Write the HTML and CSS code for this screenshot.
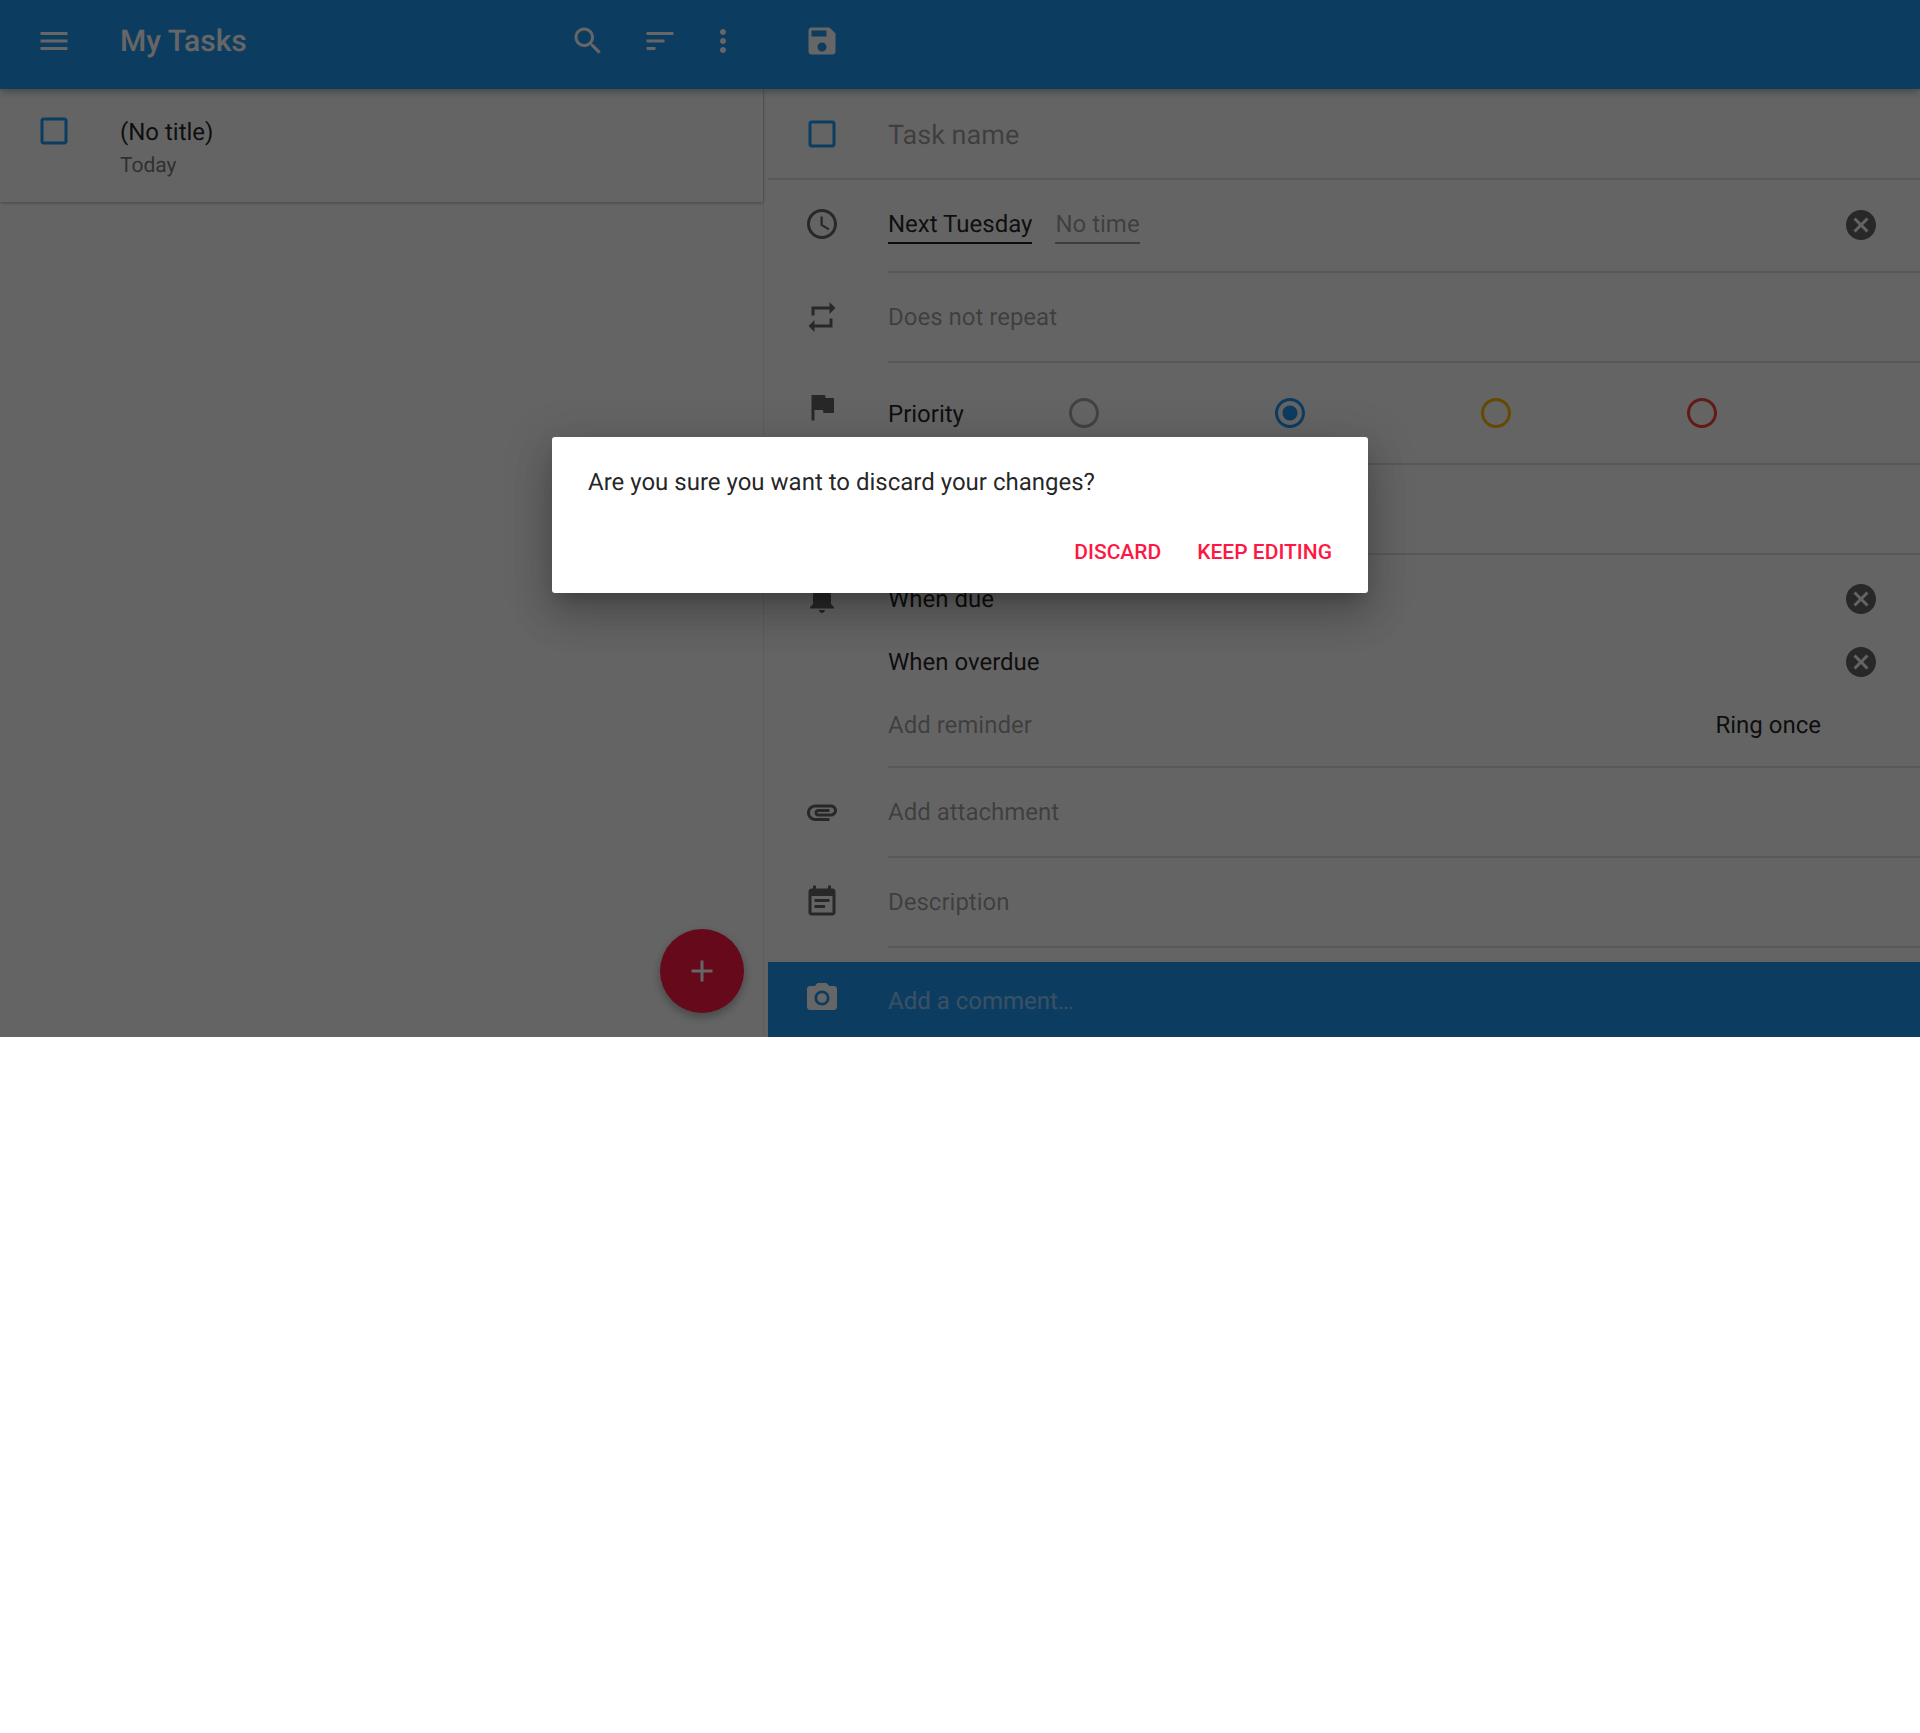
FILE: index.html
```html
<!DOCTYPE html>
<html lang="en">
<head>
    <meta charset="UTF-8">
    <meta name="viewport" content="width=device-width, initial-scale=1.0">
    <title>My Tasks</title>
    <link rel="stylesheet" href="styles.css">
</head>
<body>
    <div class="app">
        <!-- Top bar -->
        <header class="toolbar">
            <div class="toolbar-list">
                <svg class="icon" viewBox="0 0 24 24"><path d="M3 18h18v-2H3v2zm0-5h18v-2H3v2zm0-7v2h18V6H3z"/></svg>
                <h1 class="toolbar-title">My Tasks</h1>
                <div class="toolbar-actions">
                    <svg class="icon" viewBox="0 0 24 24"><path d="M15.5 14h-.79l-.28-.27C15.41 12.59 16 11.11 16 9.5 16 5.91 13.09 3 9.5 3S3 5.91 3 9.5 5.91 16 9.5 16c1.61 0 3.09-.59 4.23-1.57l.27.28v.79l5 4.99L20.49 19l-4.99-5zm-6 0C7.01 14 5 11.99 5 9.5S7.01 5 9.5 5 14 7.01 14 9.5 11.99 14 9.5 14z"/></svg>
                    <svg class="icon" viewBox="0 0 24 24"><path d="M3 18h6v-2H3v2zM3 6v2h18V6H3zm0 7h12v-2H3v2z"/></svg>
                    <svg class="icon icon-more" viewBox="0 0 24 24"><path d="M12 8c1.1 0 2-.9 2-2s-.9-2-2-2-2 .9-2 2 .9 2 2 2zm0 2c-1.1 0-2 .9-2 2s.9 2 2 2 2-.9 2-2-.9-2-2-2zm0 6c-1.1 0-2 .9-2 2s.9 2 2 2 2-.9 2-2-.9-2-2-2z"/></svg>
                </div>
            </div>
            <div class="toolbar-edit">
                <svg class="icon" viewBox="0 0 24 24"><path d="M17 3H5c-1.11 0-2 .9-2 2v14c0 1.1.89 2 2 2h14c1.1 0 2-.9 2-2V7l-4-4zm-5 16c-1.66 0-3-1.34-3-3s1.34-3 3-3 3 1.34 3 3-1.34 3-3 3zm3-10H5V5h10v4z"/></svg>
            </div>
        </header>

        <div class="panes">
            <!-- Task list -->
            <section class="list-pane">
                <div class="task-item">
                    <svg class="icon icon-blue" viewBox="0 0 24 24"><path d="M19 5v14H5V5h14m0-2H5c-1.1 0-2 .9-2 2v14c0 1.1.9 2 2 2h14c1.1 0 2-.9 2-2V5c0-1.1-.9-2-2-2z"/></svg>
                    <div class="task-text">
                        <div class="task-title">(No title)</div>
                        <div class="task-date">Today</div>
                    </div>
                </div>
                <button class="fab">
                    <svg class="icon" viewBox="0 0 24 24"><path d="M19 13h-6v6h-2v-6H5v-2h6V5h2v6h6v2z"/></svg>
                </button>
            </section>

            <!-- Task editor -->
            <section class="edit-pane">
                <div class="row row-name">
                    <svg class="icon icon-blue" viewBox="0 0 24 24"><path d="M19 5v14H5V5h14m0-2H5c-1.1 0-2 .9-2 2v14c0 1.1.9 2 2 2h14c1.1 0 2-.9 2-2V5c0-1.1-.9-2-2-2z"/></svg>
                    <div class="row-body name-hint">Task name</div>
                </div>

                <div class="row row-when">
                    <svg class="icon icon-dark" viewBox="0 0 24 24"><path d="M11.99 2C6.47 2 2 6.48 2 12s4.47 10 9.99 10C17.52 22 22 17.52 22 12S17.52 2 11.99 2zM12 20c-4.42 0-8-3.58-8-8s3.58-8 8-8 8 3.58 8 8-3.58 8-8 8zm.5-13H11v6l5.25 3.15.75-1.23-4.5-2.67z"/></svg>
                    <div class="row-body">
                        <span class="picker">Next Tuesday</span>
                        <span class="picker picker-empty">No time</span>
                        <svg class="icon icon-clear" viewBox="0 0 24 24"><path d="M12 2C6.47 2 2 6.47 2 12s4.47 10 10 10 10-4.47 10-10S17.53 2 12 2zm5 13.59L15.59 17 12 13.41 8.41 17 7 15.59 10.59 12 7 8.41 8.41 7 12 10.59 15.59 7 17 8.41 13.41 12 17 15.59z"/></svg>
                    </div>
                </div>

                <div class="row">
                    <svg class="icon icon-dark" viewBox="0 0 24 24"><path d="M7 7h10v3l4-4-4-4v3H5v6h2V7zm10 10H7v-3l-4 4 4 4v-3h12v-6h-2v4z"/></svg>
                    <div class="row-body hint">Does not repeat</div>
                </div>

                <div class="row row-priority">
                    <svg class="icon icon-dark" viewBox="0 0 24 24"><path d="M14.4 6L14 4H5v17h2v-7h5.6l.4 2h7V6z"/></svg>
                    <div class="row-body">
                        <span class="priority-label">Priority</span>
                        <div class="priority-options">
                            <svg class="icon radio-none" viewBox="0 0 24 24"><path d="M12 2C6.48 2 2 6.48 2 12s4.48 10 10 10 10-4.48 10-10S17.52 2 12 2zm0 18c-4.42 0-8-3.58-8-8s3.58-8 8-8 8 3.58 8 8-3.58 8-8 8z"/></svg>
                            <svg class="icon radio-low" viewBox="0 0 24 24"><path d="M12 7c-2.76 0-5 2.24-5 5s2.24 5 5 5 5-2.24 5-5-2.24-5-5-5zm0-5C6.48 2 2 6.48 2 12s4.48 10 10 10 10-4.48 10-10S17.52 2 12 2zm0 18c-4.42 0-8-3.58-8-8s3.58-8 8-8 8 3.58 8 8-3.58 8-8 8z"/></svg>
                            <svg class="icon radio-medium" viewBox="0 0 24 24"><path d="M12 2C6.48 2 2 6.48 2 12s4.48 10 10 10 10-4.48 10-10S17.52 2 12 2zm0 18c-4.42 0-8-3.58-8-8s3.58-8 8-8 8 3.58 8 8-3.58 8-8 8z"/></svg>
                            <svg class="icon radio-high" viewBox="0 0 24 24"><path d="M12 2C6.48 2 2 6.48 2 12s4.48 10 10 10 10-4.48 10-10S17.52 2 12 2zm0 18c-4.42 0-8-3.58-8-8s3.58-8 8-8 8 3.58 8 8-3.58 8-8 8z"/></svg>
                        </div>
                    </div>
                </div>

                <div class="row">
                    <div class="row-body row-body-blank"></div>
                </div>

                <div class="row row-reminders">
                    <svg class="icon icon-dark" viewBox="0 0 24 24"><path d="M12 22c1.1 0 2-.9 2-2h-4c0 1.1.89 2 2 2zm6-6v-5c0-3.07-1.64-5.64-4.5-6.32V4c0-.83-.67-1.5-1.5-1.5s-1.5.67-1.5 1.5v.68C7.63 5.36 6 7.92 6 11v5l-2 2v1h16v-1l-2-2z"/></svg>
                    <div class="row-body">
                        <div class="reminder">
                            <span>When due</span>
                            <svg class="icon icon-clear" viewBox="0 0 24 24"><path d="M12 2C6.47 2 2 6.47 2 12s4.47 10 10 10 10-4.47 10-10S17.53 2 12 2zm5 13.59L15.59 17 12 13.41 8.41 17 7 15.59 10.59 12 7 8.41 8.41 7 12 10.59 15.59 7 17 8.41 13.41 12 17 15.59z"/></svg>
                        </div>
                        <div class="reminder">
                            <span>When overdue</span>
                            <svg class="icon icon-clear" viewBox="0 0 24 24"><path d="M12 2C6.47 2 2 6.47 2 12s4.47 10 10 10 10-4.47 10-10S17.53 2 12 2zm5 13.59L15.59 17 12 13.41 8.41 17 7 15.59 10.59 12 7 8.41 8.41 7 12 10.59 15.59 7 17 8.41 13.41 12 17 15.59z"/></svg>
                        </div>
                        <div class="reminder">
                            <span class="hint">Add reminder</span>
                            <span class="ring-mode">Ring once</span>
                        </div>
                    </div>
                </div>

                <div class="row">
                    <svg class="icon icon-dark" viewBox="0 0 24 24"><path d="M2 12.5C2 9.46 4.46 7 7.5 7H18c2.21 0 4 1.79 4 4s-1.79 4-4 4H9.5C8.12 15 7 13.88 7 12.5S8.12 10 9.5 10H17v2H9.41c-.55 0-.55 1 0 1H18c1.1 0 2-.9 2-2s-.9-2-2-2H7.5C5.57 9 4 10.57 4 12.5S5.57 16 7.5 16H17v2H7.5C4.46 18 2 15.54 2 12.5z"/></svg>
                    <div class="row-body hint">Add attachment</div>
                </div>

                <div class="row">
                    <svg class="icon icon-dark" viewBox="0 0 24 24"><path d="M17 10H7v2h10v-2zm2-7h-1V1h-2v2H8V1H6v2H5c-1.11 0-1.99.9-1.99 2L3 19c0 1.1.89 2 2 2h14c1.1 0 2-.9 2-2V5c0-1.1-.9-2-2-2zm0 16H5V8h14v11zm-5-5H7v2h7v-2z"/></svg>
                    <div class="row-body hint">Description</div>
                </div>

                <div class="comment-bar">
                    <svg class="icon" viewBox="0 0 24 24"><circle cx="12" cy="12" r="3.2"/><path d="M9 2L7.17 4H4c-1.1 0-2 .9-2 2v12c0 1.1.9 2 2 2h16c1.1 0 2-.9 2-2V6c0-1.1-.9-2-2-2h-3.17L15 2H9zm3 15c-2.76 0-5-2.24-5-5s2.24-5 5-5 5 2.24 5 5-2.24 5-5 5z"/></svg>
                    <span class="comment-hint">Add a comment…</span>
                </div>
            </section>
        </div>

        <!-- Discard dialog -->
        <div class="scrim">
            <div class="dialog">
                <p class="dialog-text">Are you sure you want to discard your changes?</p>
                <div class="dialog-actions">
                    <button class="dialog-btn">DISCARD</button>
                    <button class="dialog-btn">KEEP EDITING</button>
                </div>
            </div>
        </div>
    </div>
</body>
</html>
```

FILE: styles.css
```css
body {
    font-family: Roboto, "Liberation Sans", sans-serif;
    background-color: white;
    color: rgba(0, 0, 0, 0.87);
    margin: 0;
    padding: 0;
    font-size: 24px;
    text-rendering: geometricPrecision;
}

.app {
    position: relative;
    height: 1037px;
    overflow: hidden;
    display: flex;
    flex-direction: column;
    background-color: #fafafa;
}

.icon {
    width: 36px;
    height: 36px;
    flex: none;
    fill: currentColor;
}

.icon-blue {
    color: #2196f3;
}

.icon-dark {
    color: rgba(0, 0, 0, 0.6);
}

.icon-clear {
    color: rgba(0, 0, 0, 0.6);
    margin-left: auto;
    margin-right: 41px;
}

.hint {
    color: rgba(0, 0, 0, 0.38);
}

/* Top bar */
.toolbar {
    position: relative;
    z-index: 1;
    flex: none;
    height: 89px;
    display: flex;
    background-color: #2196f3;
    color: white;
    box-shadow: 0 2px 8px rgba(0, 0, 0, 0.35);
}

.toolbar-list {
    width: 768px;
    box-sizing: border-box;
    padding: 23px 27px 0 36px;
    display: flex;
    align-items: flex-start;
}

.toolbar-title {
    margin: 1px 0 0 48px;
    font-size: 30px;
    font-weight: 500;
    line-height: 36px;
}

.toolbar-actions {
    margin-left: auto;
    display: flex;
    gap: 36px;
}

.icon-more {
    margin-left: -9px;
}

.toolbar-edit {
    padding: 23px 0 0 36px;
}

/* Panes */
.panes {
    flex: 1;
    min-height: 0;
    display: grid;
    grid-template-columns: 764px 1fr;
    gap: 4px;
}

.list-pane {
    position: relative;
    border-right: 1px solid rgba(0, 0, 0, 0.08);
}

.task-item {
    height: 113px;
    box-sizing: border-box;
    padding: 24px 0 0 36px;
    display: flex;
    align-items: flex-start;
    background-color: #fafafa;
    box-shadow: 0 1px 3px rgba(0, 0, 0, 0.3);
}

.task-text {
    margin-left: 48px;
    margin-top: 3px;
}

.task-title {
    line-height: 32px;
}

.task-date {
    margin-top: 4px;
    font-size: 21px;
    line-height: 28px;
    color: rgba(0, 0, 0, 0.54);
}

.fab {
    position: absolute;
    right: 19px;
    bottom: 24px;
    width: 84px;
    height: 84px;
    padding: 0;
    border: none;
    border-radius: 50%;
    display: flex;
    align-items: center;
    justify-content: center;
    background-color: #ff1744;
    color: white;
    box-shadow: 0 4px 10px rgba(0, 0, 0, 0.3);
}

.edit-pane {
    display: flex;
    flex-direction: column;
}

.row {
    height: 90px;
    box-sizing: border-box;
    padding-left: 36px;
    display: flex;
    align-items: center;
    flex: none;
}

.row > .icon {
    margin-bottom: 2px;
}

.row-body {
    flex: 1;
    align-self: stretch;
    margin-left: 48px;
    display: flex;
    align-items: center;
    border-bottom: 2px solid rgba(0, 0, 0, 0.12);
}

.row-body-blank {
    margin-left: 84px;
}

.row-name {
    height: 91px;
    border-bottom: 2px solid rgba(0, 0, 0, 0.12);
}

.row-name > .icon {
    margin-bottom: 0;
}

.row-name .row-body {
    padding-top: 2px;
    border-bottom: none;
}

.name-hint {
    font-size: 27px;
    color: rgba(0, 0, 0, 0.38);
}

.row-when {
    height: 93px;
}

.row-when > .icon {
    margin-bottom: 5px;
}

.row-when .icon-clear {
    margin-bottom: 2px;
}

.picker {
    line-height: 32px;
    padding-bottom: 2px;
    border-bottom: 2px solid rgba(0, 0, 0, 0.87);
    margin-right: 23px;
}

.picker-empty {
    color: rgba(0, 0, 0, 0.38);
    border-bottom-color: rgba(0, 0, 0, 0.38);
}

.row-priority {
    height: 102px;
}

.row-priority > .icon {
    align-self: flex-start;
    margin-top: 26px;
    margin-bottom: 0;
}

.priority-label {
    width: 93px;
    padding-top: 1px;
}

.priority-options {
    display: grid;
    grid-template-columns: repeat(4, 206px);
    justify-items: center;
}

.radio-none {
    color: rgba(0, 0, 0, 0.34);
}

.radio-low {
    color: #2196f3;
}

.radio-medium {
    color: #ffb300;
}

.radio-high {
    color: #f44336;
}

.row-reminders {
    height: 213px;
}

.row-reminders > .icon {
    align-self: flex-start;
    margin-top: 25px;
    margin-bottom: 0;
}

.row-reminders .row-body {
    display: block;
    padding-top: 12px;
}

.reminder {
    height: 63px;
    display: flex;
    align-items: center;
}

.ring-mode {
    margin-left: auto;
    margin-right: 99px;
}

.comment-bar {
    margin-top: auto;
    height: 75px;
    box-sizing: border-box;
    padding: 18px 0 0 36px;
    display: flex;
    align-items: flex-start;
    background-color: #2196f3;
    color: white;
}

.comment-hint {
    margin-left: 48px;
    margin-top: 1px;
    line-height: 40px;
    color: rgba(255, 255, 255, 0.5);
}

/* Dialog */
.scrim {
    position: absolute;
    inset: 0;
    z-index: 2;
    background-color: rgba(0, 0, 0, 0.6);
    display: flex;
    align-items: flex-start;
    justify-content: center;
    padding-top: 437px;
}

.dialog {
    width: 816px;
    height: 156px;
    box-sizing: border-box;
    padding: 29px 36px 0;
    background-color: white;
    border-radius: 3px;
    box-shadow: 0 24px 38px 3px rgba(0, 0, 0, 0.14), 0 9px 46px 8px rgba(0, 0, 0, 0.12), 0 11px 15px -7px rgba(0, 0, 0, 0.2);
}

.dialog-text {
    margin: 0;
    line-height: 32px;
}

.dialog-actions {
    margin-top: 40px;
    display: flex;
    justify-content: flex-end;
    gap: 36px;
}

.dialog-btn {
    padding: 0;
    border: none;
    background: none;
    font-family: inherit;
    font-size: 21px;
    font-weight: 500;
    line-height: 28px;
    color: #ff1744;
}
```
